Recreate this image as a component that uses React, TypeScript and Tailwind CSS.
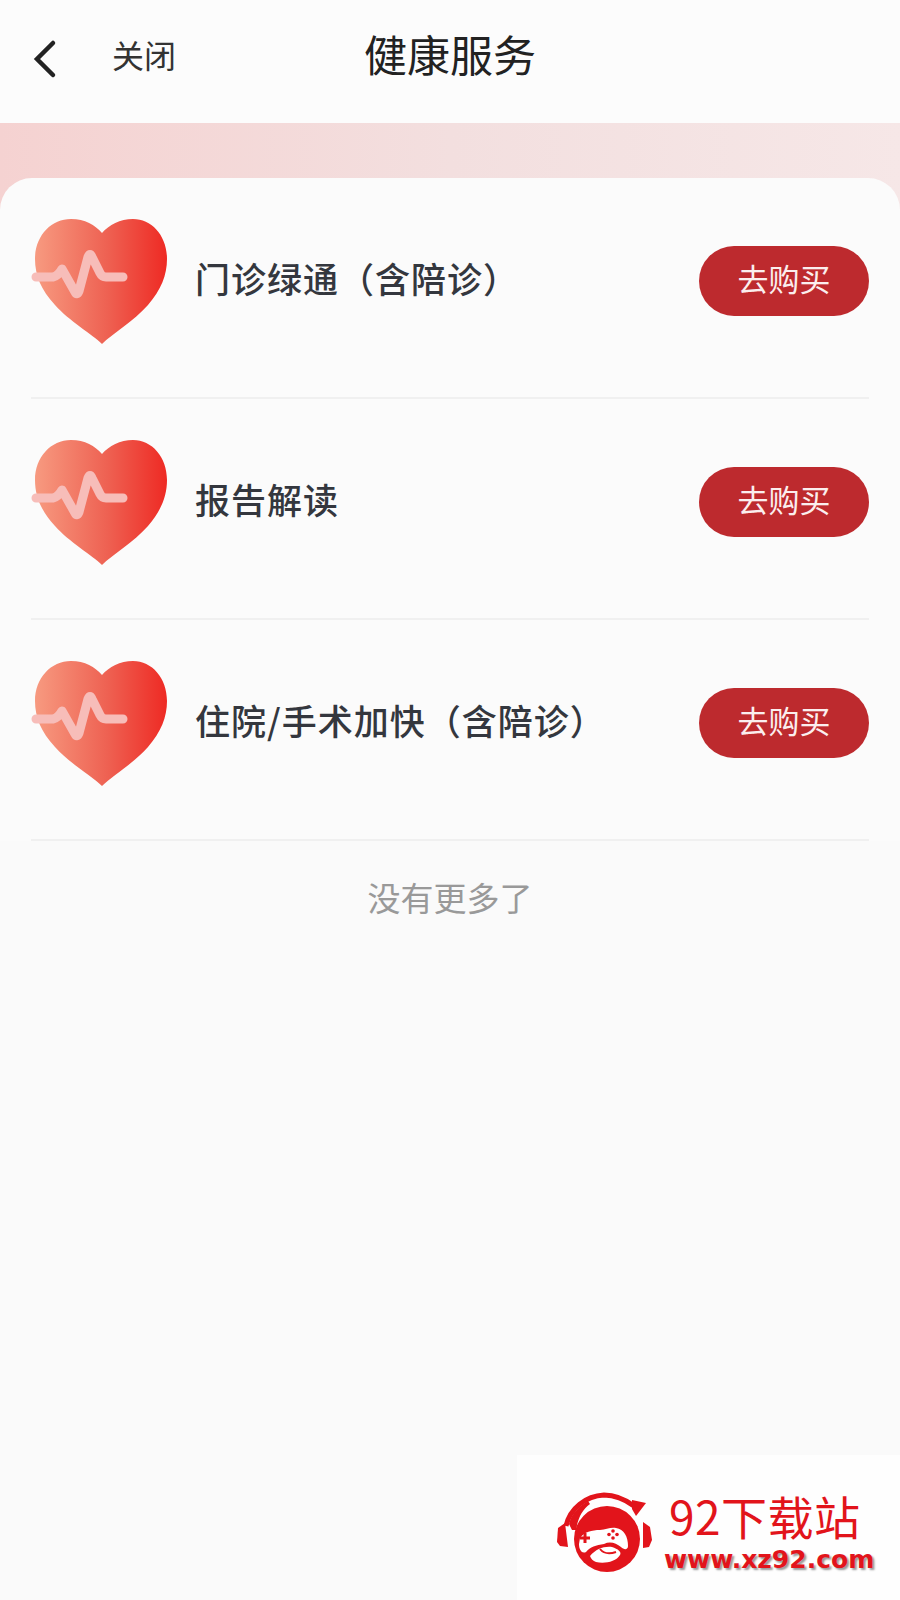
const CJK = "font-['Noto_Sans_CJK_SC','Noto_Sans',sans-serif]";

const services = ['门诊绿通（含陪诊）', '报告解读', '住院/手术加快（含陪诊）'];

function BackIcon() {
  return (
    <svg width="26" height="40" viewBox="0 0 26 40" fill="none" className="mb-[2px]">
      <path d="M21 4 L5 20 L21 36" stroke="#222" strokeWidth="4.5" strokeLinecap="round" strokeLinejoin="miter" />
    </svg>
  );
}

function HeartIcon({ id }: { id: string }) {
  return (
    <svg width="137" height="128" viewBox="0 0 137 128" fill="none" className="mt-[4px] shrink-0">
      <defs>
        <linearGradient id={id} x1="0" y1="0" x2="1" y2="0">
          <stop offset="0" stopColor="#f79a80" />
          <stop offset="0.55" stopColor="#ee6152" />
          <stop offset="1" stopColor="#ee2a24" />
        </linearGradient>
      </defs>
      <path
        d="M71 125 C61 115 38 102 24 86 C10 71 4 56 4 40 C4 17 20 0 40 0 C54 0 64 6 71 14 C78 6 89 0 102 0 C121 0 136 17 136 40 C136 56 130 71 117 86 C103 102 81 115 71 125 Z"
        fill={`url(#${id})`}
      />
      <path
        d="M5 58 L22 58 Q27 57 31 50 L44 73 Q46 77 48 72 L57 38 Q59 33 61 38 L69 54 Q71 58 75 58 L92 58"
        stroke="#f7bdb9"
        strokeWidth="9"
        strokeLinecap="round"
        strokeLinejoin="round"
      />
    </svg>
  );
}

function WatermarkLogo() {
  return (
    <svg width="96" height="80" viewBox="0 0 96 80" fill="none" className="mt-[9px] shrink-0">
      <path d="M10 34 C14 16 30 4 48 3 C60 3 70 8 78 14" stroke="#e2141b" strokeWidth="5" />
      <path d="M76 8 L90 11 L80 24 L76 17 Z" fill="#e2141b" />
      <path d="M13 32 C16 20 24 14 32 9 L34 12 C26 18 22 26 20 38 L16 38 Z" fill="#e2141b" />
      <path d="M9 31 L2 36 L1 50 L4 54 L12 55 Z" fill="#e2141b" />
      <path d="M87 30 L94 35 L96 48 L93 55 L87 56 Z" fill="#e2141b" />
      <circle cx="51" cy="47" r="33" fill="#e2141b" />
      <path
        d="M24 46 C28 40 36 38 44 38 C50 38 54 35 60 36 C68 37 72 45 72 54 C72 58 68 58 65 55 C60 51 54 49 48 52 C40 53 34 55 30 60 C26 62 23 58 23 52 Z"
        fill="#fff"
      />
      <path d="M29 41 V51 M24 46 H34" stroke="#e2141b" strokeWidth="3" />
      <circle cx="57" cy="39" r="1.8" fill="#e2141b" />
      <circle cx="61" cy="42.5" r="1.8" fill="#e2141b" />
      <circle cx="53" cy="42.5" r="1.8" fill="#e2141b" />
      <circle cx="57" cy="46" r="1.8" fill="#e2141b" />
      <path d="M34 64 C40 57 48 54 56 55 C62 57 66 60 64 63 C60 70 48 72 40 70 C37 69 35 67 34 64 Z" fill="#fff" />
      <path d="M44 57 C48 62 54 62 60 60" stroke="#e2141b" strokeWidth="2" />
    </svg>
  );
}

function ServiceRow({ name, index }: { name: string; index: number }) {
  return (
    <div className="mx-[31px] flex h-[221px] items-center border-b-2 border-[#f0f0f0] pb-[14px]">
      <HeartIcon id={`heart-${index}`} />
      <span className="ml-[27px] flex-1 pb-[7px] text-[35px] leading-none font-medium tracking-[1px] text-[#34373e]">{name}</span>
      <button className="h-[70px] w-[170px] rounded-full bg-[#bd2a2e] pb-[4px] text-[31px] text-[#fbeeee]">去购买</button>
    </div>
  );
}

export default function App() {
  return (
    <div className={`relative h-[1600px] w-[900px] overflow-hidden bg-[#fafafa] ${CJK}`}>
      <header className="relative flex h-[123px] items-center bg-[#fcfcfc] pb-[4px] pl-[32px]">
        <BackIcon />
        <span className="ml-[54px] pb-[12px] text-[32px] text-[#333]">关闭</span>
        <h1 className="absolute inset-x-0 pb-[12px] text-center text-[43px] font-normal text-[#222]">健康服务</h1>
      </header>

      <div className="bg-gradient-to-r from-[#f5d2d1] via-[#f3dfdf] to-[#f6e7e7]">
        <div className="h-[55px]" />
        <div className="rounded-t-[32px] bg-[#fbfbfb]">
          {services.map((name, i) => (
            <ServiceRow key={name} name={name} index={i} />
          ))}
        </div>
      </div>

      <div className="bg-[#fafafa] pt-[35px] text-center text-[33px] leading-[42px] text-[#999]">没有更多了</div>

      {/* watermark pasted over the corner */}
      <div className="absolute bottom-0 right-0 flex h-[145px] w-[383px] items-center bg-[#fefefe] pl-[39px]">
        <WatermarkLogo />
        <div className="mt-[6px] ml-[12px] flex flex-col">
          <span className="ml-[5px] text-[46px] leading-[52px] tracking-[0.5px] text-[#e2141b]">92下载站</span>
          <span className="mt-[6px] font-['DejaVu_Sans',sans-serif] text-[25px] leading-[26px] font-bold text-[#e2141b] [text-shadow:2px_2px_2px_#999]">
            www.xz92.com
          </span>
        </div>
      </div>
    </div>
  );
}
